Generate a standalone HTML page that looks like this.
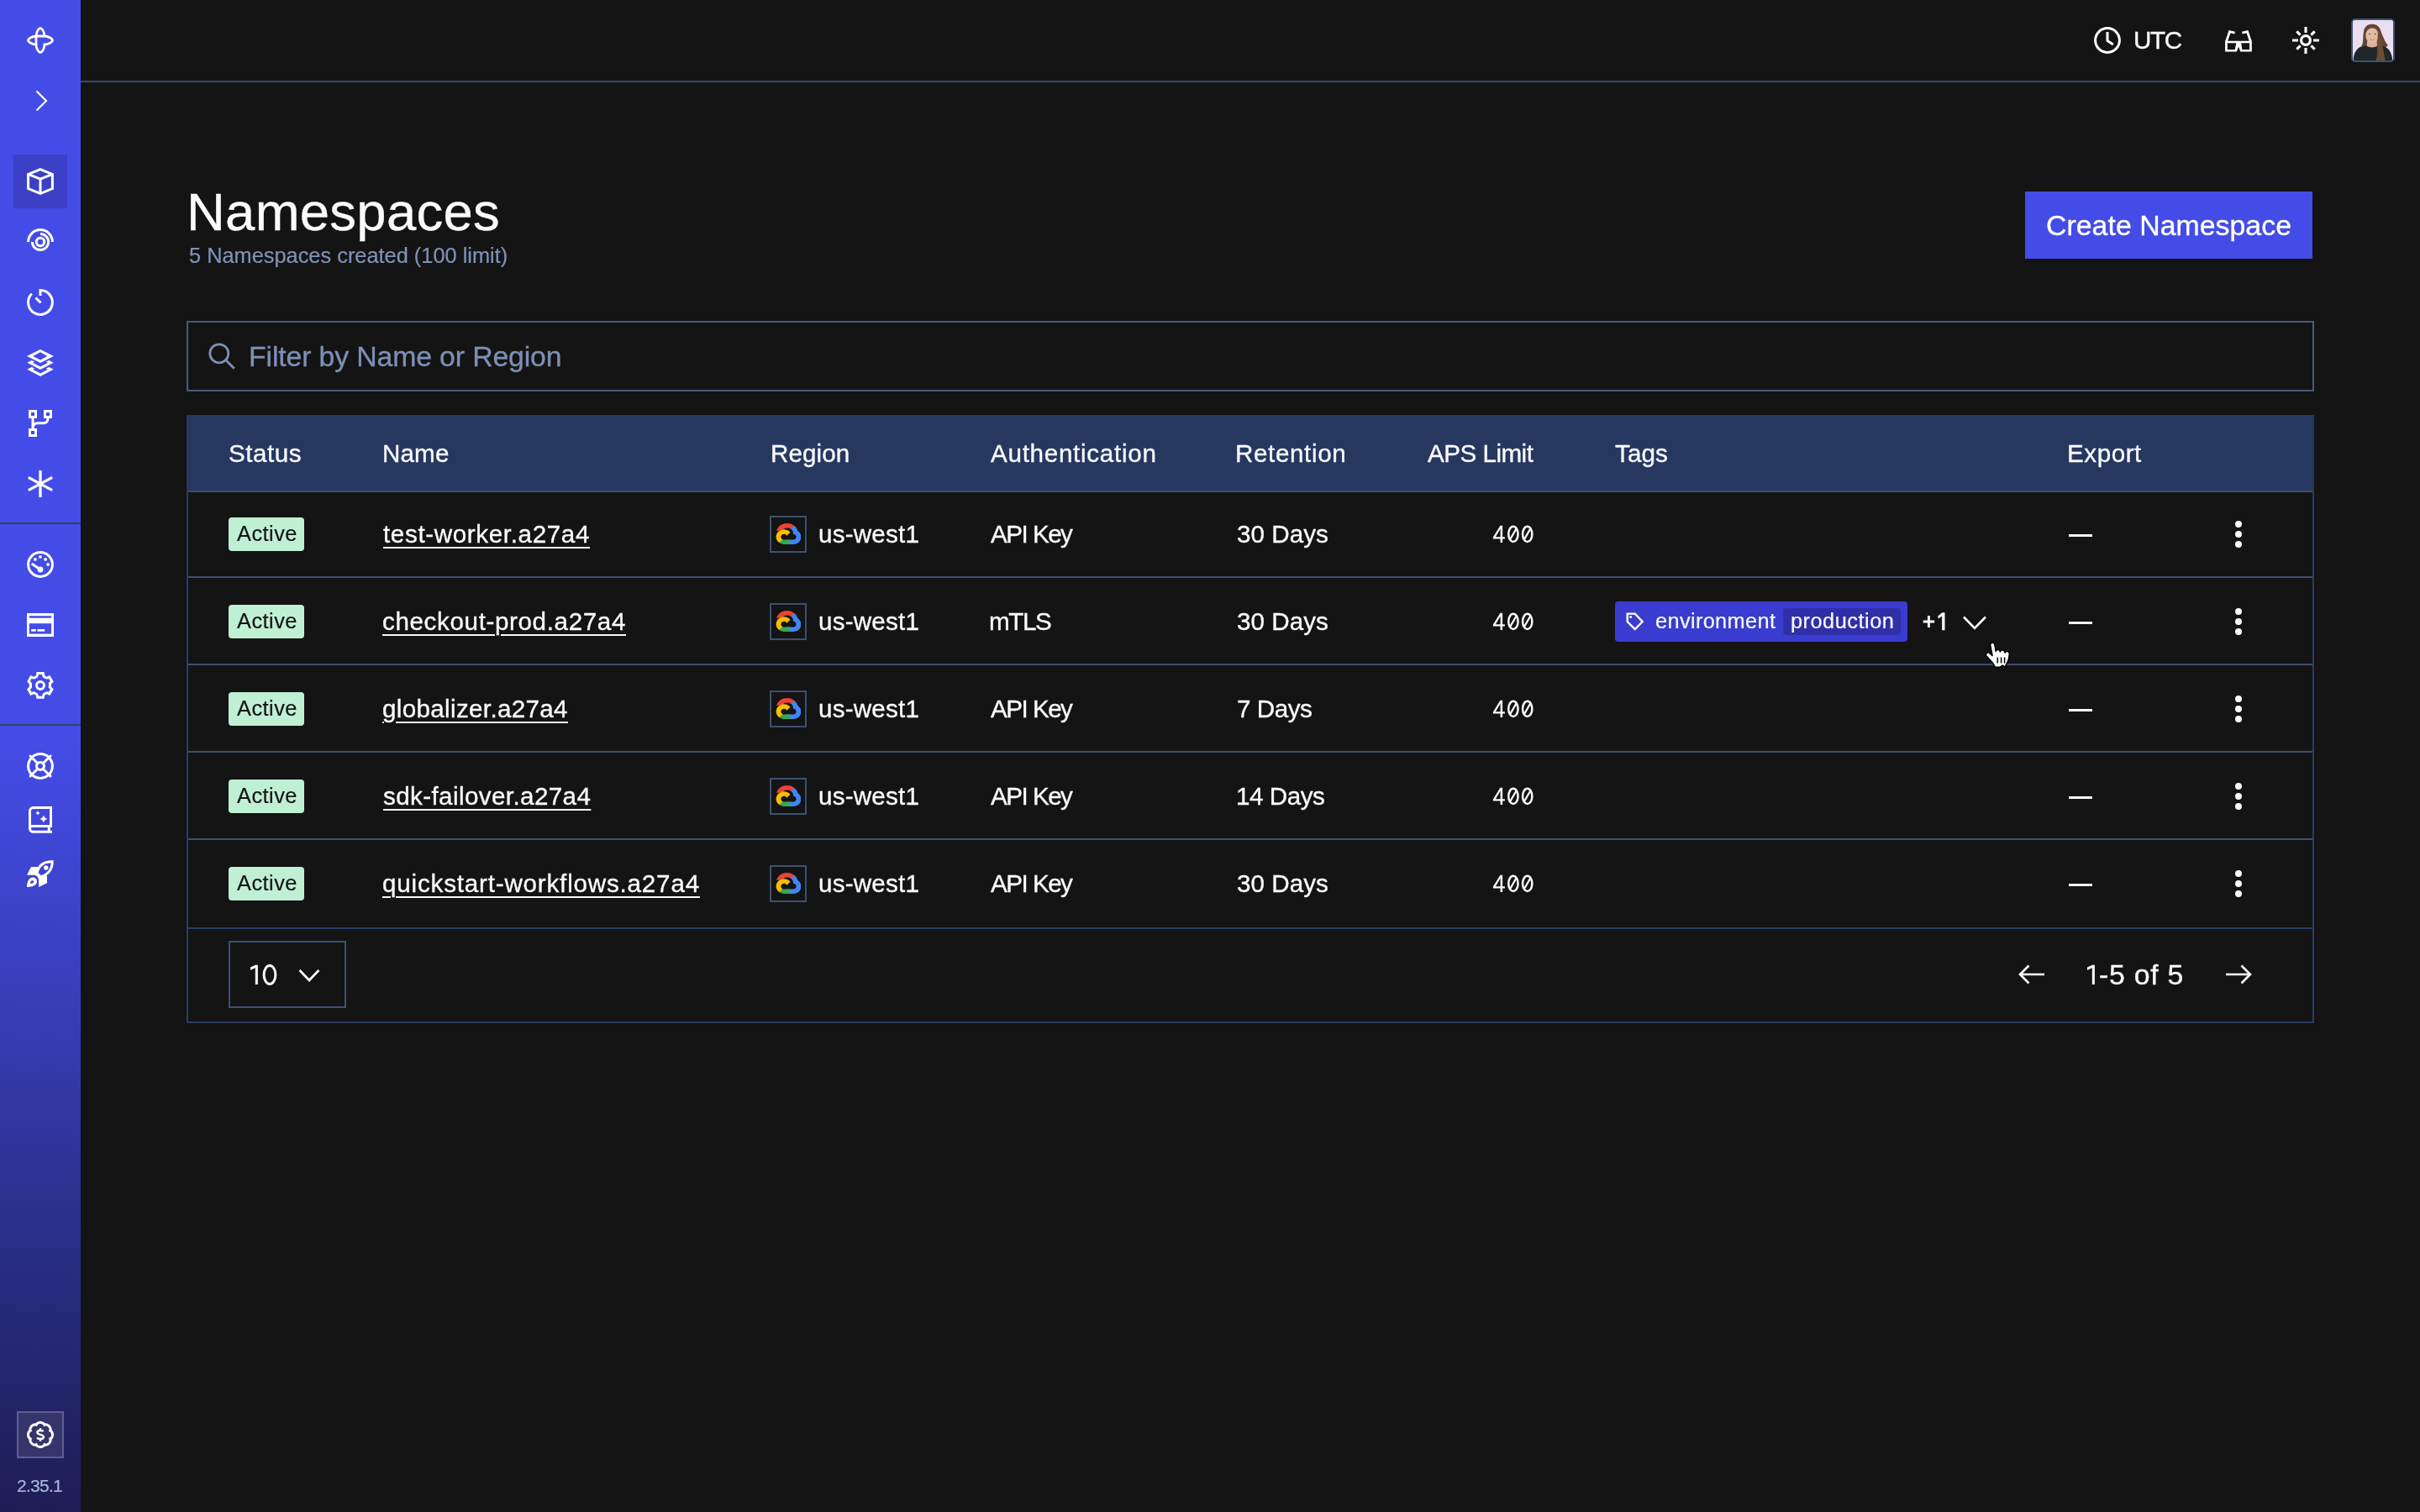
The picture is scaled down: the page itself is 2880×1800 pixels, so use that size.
<!DOCTYPE html>
<html><head><meta charset="utf-8"><style>
*{box-sizing:border-box;margin:0;padding:0}
html,body{width:2880px;height:1800px;overflow:hidden;background:#141414;font-family:"Liberation Sans",sans-serif;color:#f8fafc}
.abs{position:absolute}
.t{position:absolute;white-space:nowrap;line-height:1;will-change:transform;-webkit-text-stroke:0.35px currentColor}
.sm{-webkit-text-stroke:0.2px currentColor}
.lnk{text-decoration:underline;text-decoration-thickness:2px;text-underline-offset:5px}
#side{position:absolute;left:0;top:0;width:96px;height:1800px;background:linear-gradient(180deg,#444ce7 0px,#444ce7 880px,#383db7 1200px,#292d83 1500px,#1e1d55 1800px)}
.ico{position:absolute;left:32px;width:32px;height:32px;overflow:visible}
.sep{position:absolute;left:0;width:96px;height:2px;background:#334452}
@media (max-width:2000px){html{zoom:0.5}}
</style></head>
<body>
<div id="side">
  <!-- logo -->
  <svg class="ico" style="top:32px" viewBox="0 0 32 32" fill="none" stroke="#fff" stroke-width="2.8">
    <path d="M11 21 C6.5 21 1.6 18 1.6 16 C1.6 14 6.5 11 11 11 H21 C25.5 11 30.4 14 30.4 16 C30.4 18 25.5 21 21 21 C21 25.5 18 30.4 16 30.4 C14 30.4 11 25.5 11 21 V11 C11 6.5 14 1.6 16 1.6 C18 1.6 21 6.5 21 11"/>
  </svg>
  <!-- chevron -->
  <svg class="ico" style="top:104px" viewBox="0 0 32 32" fill="none" stroke="#fff" stroke-width="2.2">
    <path d="M11.5 4.5 L23 16 L11.5 27.5"/>
  </svg>
  <div class="abs" style="left:16px;top:184px;width:64px;height:64px;background:#3b40c6"></div>
  <!-- cube -->
  <svg class="ico" style="top:200px" viewBox="0 0 32 32" fill="none" stroke="#fff" stroke-width="3" stroke-linejoin="miter">
    <path d="M16 1.6 L30.4 7.4 V24.6 L16 30.4 L1.6 24.6 V7.4 Z M1.6 7.4 L16 13.2 L30.4 7.4 M16 13.2 V30.4"/>
  </svg>
  <!-- workflows rings -->
  <svg class="ico" style="top:272px" viewBox="0 0 32 32" fill="none" stroke="#fff" stroke-width="3">
    <path d="M1.6 16 A14.4 14.4 0 0 1 30.4 16"/>
    <path d="M16 6.4 A9.6 9.6 0 1 1 6.4 16"/>
    <circle cx="16" cy="16" r="4.7"/>
  </svg>
  <!-- timer -->
  <svg class="ico" style="top:344px" viewBox="0 0 32 32" fill="none" stroke="#fff" stroke-width="3">
    <path d="M16 8 V1.6 A14.4 14.4 0 1 1 5.8 5.8"/>
    <path d="M10.5 10.5 L16.5 16.5"/>
  </svg>
  <!-- layers -->
  <svg class="ico" style="top:416px" viewBox="0 0 32 32" fill="#fff">
    <path fill-rule="evenodd" d="M16 0 L32 8 L16 16 L0 8 Z M16 3.3 L24.4 8 L16 12.6 L7.2 8 Z"/>
    <path d="M0.3 15.8 L5.6 13 L9.1 14.4 L7.2 16 L16 20.6 L24.8 16 L22.9 14.4 L26.4 13 L31.7 15.8 L16 24 Z"/>
    <path d="M0.3 23.8 L5.6 21 L9.1 22.4 L7.2 24 L16 28.6 L24.8 24 L22.9 22.4 L26.4 21 L31.7 23.8 L16 32 Z"/>
  </svg>
  <!-- branch -->
  <svg class="ico" style="top:488px" viewBox="0 0 32 32" fill="none" stroke="#fff" stroke-width="3">
    <rect x="3.5" y="1.5" width="7" height="7"/>
    <rect x="21.5" y="1.5" width="7" height="7"/>
    <rect x="3.5" y="23.5" width="7" height="7"/>
    <path d="M7 10 V22 M25 10 C25 13.5 23 15.8 19.5 15.8 H12.5 C9.5 15.8 7.5 18 7.2 21"/>
  </svg>
  <!-- asterisk -->
  <svg class="ico" style="top:560px" viewBox="0 0 32 32" fill="none" stroke="#fff" stroke-width="3.3">
    <path d="M16 0 V32 M1.8 8.4 L30.2 23.6 M1.8 23.6 L30.2 8.4"/>
  </svg>
  <div class="sep" style="top:622px"></div>
  <!-- gauge -->
  <svg class="ico" style="top:656px" viewBox="0 0 32 32" fill="#fff">
    <circle cx="16" cy="16" r="14.4" fill="none" stroke="#fff" stroke-width="3"/>
    <circle cx="16" cy="6.9" r="1.9"/><circle cx="9.9" cy="9.9" r="1.9"/><circle cx="22.1" cy="9.9" r="1.9"/><circle cx="25.1" cy="16" r="1.9"/>
    <path d="M5.6 14.9 L16 22" stroke="#fff" stroke-width="3"/>
    <circle cx="16" cy="22" r="3.4"/>
  </svg>
  <!-- card -->
  <svg class="ico" style="top:728px" viewBox="0 0 32 32">
    <rect x="0" y="2" width="32" height="28" fill="#fff"/>
    <rect x="2.8" y="5.2" width="26.3" height="2.5" fill="#444ce7"/>
    <rect x="2.8" y="14.2" width="26.3" height="12.4" fill="#444ce7"/>
    <rect x="5.2" y="21" width="5.5" height="2.7" fill="#fff"/>
    <rect x="12.5" y="21" width="8.7" height="2.7" fill="#fff"/>
  </svg>
  <!-- gear -->
  <svg class="ico" style="top:800px" viewBox="0 0 32 32" fill="#fff">
    <path fill-rule="evenodd" d="M11.4 0.1 L20.7 0.1 L21.05 4.06 L23.4 5.65 L27.4 4.06 L31.84 11.5 L29 14.2 L29 17.7 L31.84 20.4 L27.4 27.9 L23.4 26.3 L21.05 27.9 L20.7 31.84 L11.4 31.84 L11.05 27.9 L8.5 26.3 L4.2 27.9 L0.1 20.4 L2.8 17.7 L2.8 14.2 L0.1 11.5 L4.2 4.06 L8.5 5.65 L11.05 4.06 Z M13.9 3.1 L18 3.1 L18.8 6.3 L23 8.5 L26 7.9 L27.9 11 L25.65 13.1 L26 16 L25.65 18.7 L27.9 20.6 L26 23.7 L23 23.3 L18.8 25.65 L18 28.8 L13.9 28.8 L13.1 25.65 L8.8 23.3 L5.3 23.7 L3.9 20.6 L6 18.7 L6 13.3 L3.9 11 L5.3 7.9 L8.8 8.5 L13.1 6.3 Z"/>
    <circle cx="16" cy="16" r="4.5" fill="none" stroke="#fff" stroke-width="3"/>
  </svg>
  <div class="sep" style="top:862px"></div>
  <!-- lifebuoy -->
  <svg class="ico" style="top:896px" viewBox="0 0 32 32" fill="none" stroke="#fff" stroke-width="3">
    <circle cx="16" cy="16" r="14.4"/>
    <circle cx="16" cy="16" r="4.5"/>
    <path d="M4 4 L12.8 12.8 M28 4 L19.2 12.8 M4 28 L12.8 19.2 M28 28 L19.2 19.2" stroke-linecap="round"/>
  </svg>
  <!-- book -->
  <svg class="ico" style="top:960px" viewBox="0 0 32 32" fill="none" stroke="#fff" stroke-width="3">
    <path d="M28.5 25 V1.6 H7.5 A4 4 0 0 0 3.5 5.6 V26.3 A4 4 0 0 0 7.5 30.3 H30"/>
    <path d="M3.5 26.5 A3 3 0 0 1 6.5 23.4 H30 M26.3 23.4 V30.3"/>
    <path fill="#fff" stroke="none" d="M19.9 10.2 C20.5 12.8 22 14.3 24.6 14.9 C22 15.5 20.5 17 19.9 19.6 C19.3 17 17.8 15.5 15.2 14.9 C17.8 14.3 19.3 12.8 19.9 10.2 Z M13 5.1 C13.35 6.6 14.1 7.55 15.8 7.9 C14.1 8.25 13.35 9.2 13 10.7 C12.65 9.2 11.9 8.25 10.2 7.9 C11.9 7.55 12.65 6.6 13 5.1 Z"/>
  </svg>
  <!-- rocket -->
  <svg class="ico" style="top:1024px" viewBox="0 0 32 32">
    <path fill="#fff" d="M0 17.7 L5 7.9 L13 7.9 L17 13 L24 19 L24 27.2 L14.2 32 L14 24 C14 20 11.5 17.7 8 17.7 Z"/>
    <path fill="#3e45d0" stroke="#fff" stroke-width="3" d="M12 15.5 C14 6 21 1.6 30.2 1.8 C30.4 10.5 25.5 17.5 16.5 19.8 Z"/>
    <circle cx="22.8" cy="9" r="2.7" fill="#fff"/>
    <path fill="#fff" d="M0 32 C0 26 2.5 20.5 7 20.5 C10 20.5 12 22.5 12 25.5 C12 30 6 32 0 32 Z"/>
    <path fill="#3d43cd" d="M3.8 28 C3.8 26 5 24.2 6.5 24.2 C7.5 24.2 8.2 24.9 8.2 25.8 C8.2 27.2 6.2 28 3.8 28 Z"/>
  </svg>
  <!-- billing badge -->
  <div class="abs" style="left:20px;top:1680px;width:56px;height:56px;background:#35356b;border:2px solid #5d5e96"></div>
  <svg class="ico" style="top:1692px" viewBox="0 0 32 32" fill="none" stroke="#fff" stroke-width="3">
    <path d="M16.00 1.50 L16.57 1.52 L17.13 1.60 L17.69 1.72 L18.24 1.88 L18.76 2.10 L19.27 2.37 L19.76 2.68 L20.21 3.05 L20.61 3.50 L20.88 4.22 L21.58 3.90 L22.18 3.87 L22.76 3.93 L23.33 4.04 L23.87 4.22 L24.40 4.44 L24.90 4.70 L25.38 5.01 L25.83 5.36 L26.25 5.75 L26.64 6.17 L26.99 6.62 L27.30 7.10 L27.56 7.60 L27.78 8.13 L27.96 8.67 L28.07 9.24 L28.13 9.82 L28.10 10.42 L27.78 11.12 L28.50 11.39 L28.95 11.79 L29.32 12.24 L29.63 12.73 L29.90 13.24 L30.12 13.76 L30.28 14.31 L30.40 14.87 L30.48 15.43 L30.50 16.00 L30.48 16.57 L30.40 17.13 L30.28 17.69 L30.12 18.24 L29.90 18.76 L29.63 19.27 L29.32 19.76 L28.95 20.21 L28.50 20.61 L27.78 20.88 L28.10 21.58 L28.13 22.18 L28.07 22.76 L27.96 23.33 L27.78 23.87 L27.56 24.40 L27.30 24.90 L26.99 25.38 L26.64 25.83 L26.25 26.25 L25.83 26.64 L25.38 26.99 L24.90 27.30 L24.40 27.56 L23.87 27.78 L23.33 27.96 L22.76 28.07 L22.18 28.13 L21.58 28.10 L20.88 27.78 L20.61 28.50 L20.21 28.95 L19.76 29.32 L19.27 29.63 L18.76 29.90 L18.24 30.12 L17.69 30.28 L17.13 30.40 L16.57 30.48 L16.00 30.50 L15.43 30.48 L14.87 30.40 L14.31 30.28 L13.76 30.12 L13.24 29.90 L12.73 29.63 L12.24 29.32 L11.79 28.95 L11.39 28.50 L11.12 27.78 L10.42 28.10 L9.82 28.13 L9.24 28.07 L8.67 27.96 L8.13 27.78 L7.60 27.56 L7.10 27.30 L6.62 26.99 L6.17 26.64 L5.75 26.25 L5.36 25.83 L5.01 25.38 L4.70 24.90 L4.44 24.40 L4.22 23.87 L4.04 23.33 L3.93 22.76 L3.87 22.18 L3.90 21.58 L4.22 20.88 L3.50 20.61 L3.05 20.21 L2.68 19.76 L2.37 19.27 L2.10 18.76 L1.88 18.24 L1.72 17.69 L1.60 17.13 L1.52 16.57 L1.50 16.00 L1.52 15.43 L1.60 14.87 L1.72 14.31 L1.88 13.76 L2.10 13.24 L2.37 12.73 L2.68 12.24 L3.05 11.79 L3.50 11.39 L4.22 11.12 L3.90 10.42 L3.87 9.82 L3.93 9.24 L4.04 8.67 L4.22 8.13 L4.44 7.60 L4.70 7.10 L5.01 6.62 L5.36 6.17 L5.75 5.75 L6.17 5.36 L6.62 5.01 L7.10 4.70 L7.60 4.44 L8.13 4.22 L8.67 4.04 L9.24 3.93 L9.82 3.87 L10.42 3.90 L11.12 4.22 L11.39 3.50 L11.79 3.05 L12.24 2.68 L12.73 2.37 L13.24 2.10 L13.76 1.88 L14.31 1.72 L14.87 1.60 L15.43 1.52 Z"/>
    <path d="M19.6 12 C19 11.3 17.8 11 16 11 C13.5 11 12.4 12 12.4 13.3 C12.4 14.8 13.8 15.3 16 15.9 C18.5 16.5 19.8 17.2 19.8 18.7 C19.8 20.2 18.3 21 16 21 C14 21 12.7 20.5 12 19.6" stroke-width="2.5"/>
    <path d="M16 8.2 V11 M16 21 V23.8" stroke-width="2.5"/>
  </svg>
  
</div>


<div class="abs" style="left:96px;top:96px;width:2784px;height:2px;background:#3b4a66"></div>
<svg class="abs" style="left:2492px;top:32px" width="32" height="32" viewBox="0 0 32 32" fill="none" stroke="#fff" stroke-width="3"><circle cx="16" cy="16" r="14.4"/><path d="M16 6 V16.4 L22.8 20.9"/></svg>
<svg class="abs" style="left:2648px;top:32px" width="32" height="32" viewBox="0 0 32 32"><path fill="#fff" fill-rule="evenodd" d="M0.1 16.8 H31.8 V29.5 H18.3 L16 23.4 L13.9 29.5 H0.1 Z M2.8 19.3 H13.3 L11.7 26.9 H2.8 Z M19.3 19.3 H29.1 V26.9 H20.3 Z"/><path fill="none" stroke="#fff" stroke-width="2.8" d="M1.5 17.5 L5.5 5.6 L11.6 7.2 M30.4 17.5 L26.5 5.6 L20.4 7.2"/></svg>
<svg class="abs" style="left:2728px;top:32px" width="32" height="32" viewBox="0 0 32 32" fill="none" stroke="#fff"><circle cx="16" cy="16" r="5.4" stroke-width="3.2"/><path d="M16 0 V7 M16 25 V32 M0 16 H7 M25 16 H32 M5.3 5.3 L9.6 9.6 M22.4 22.4 L26.7 26.7 M26.7 5.3 L22.4 9.6 M9.6 22.4 L5.3 26.7" stroke-width="3.1"/></svg>
<div class="abs" style="left:2798px;top:22px;width:52px;height:52px;border:2px solid #3c5175;border-radius:5px;overflow:hidden;background:#e8ddf0"><svg width="48" height="48" viewBox="0 0 48 48"><rect width="48" height="48" fill="#e9dff1"/><path fill="#644633" d="M22.6 4.8 C17.5 4.8 14 8 13 13 C12.2 17 12.4 23 11.8 27 C11.5 29 10.8 30.5 9.8 31.2 L20 32 L30 32 L39.5 32 C41 31 41.8 30 41.6 29.4 C39 27 37.5 23 36.2 20 C34.5 17 33.5 13 32.5 10.5 C30.5 6.5 27 4.8 22.6 4.8 Z"/><path fill="#212628" d="M0.5 48 C1.2 39 4.5 33 11 31.2 L17 30.2 C19 32.6 27 32.6 29 30.2 L36 31 C43 32.5 46.2 38.5 47.5 48 Z"/><path fill="#d9b39a" d="M17.2 25 L16.6 30.6 C18.8 33 27.2 33 29.2 30.6 L28.8 25 Z"/><ellipse cx="23.1" cy="18.4" rx="7.7" ry="9.4" fill="#e0bba2"/><path fill="#644633" d="M15.4 14.5 C15.8 9.6 19 7.2 23 7.2 C27 7.2 30.2 9.6 30.9 14 C29 10.6 26.2 9.2 23 9.2 C19.8 9.2 17.3 10.8 15.4 14.5 Z"/><path fill="#6e4d35" d="M29.5 13 C33 19 34.5 28 36.3 35 C37.4 41 38.2 45.5 38.6 48 L27.6 48 C29.2 42 30 34 28.6 27 C29.6 22 30.2 17 29.5 13 Z"/><circle cx="19.8" cy="16.4" r="0.75" fill="#3a2a20"/><circle cx="26.6" cy="16.4" r="0.75" fill="#3a2a20"/><path d="M20.6 22.6 Q23.2 24.4 25.8 22.6" stroke="#a87264" stroke-width="0.9" fill="#eee4de"/></svg></div>
<div class="abs" style="left:2410px;top:228px;width:342px;height:80px;background:#444ce7"></div>
<div class="abs" style="left:222px;top:382px;width:2532px;height:84px;border:2px solid #4a5b7a"></div>
<svg class="abs" style="left:248px;top:408px" width="32" height="32" viewBox="0 0 32 32" fill="none" stroke="#7e8fb5" stroke-width="2.8"><circle cx="12.8" cy="12.8" r="11"/><path d="M20.8 20.8 L30.8 30.8"/></svg>
<div class="abs" style="left:222px;top:494px;width:2532px;height:90px;background:#263760"></div>
<div class="abs" style="left:222px;top:584px;width:2px;height:634px;background:#2b3c69"></div>
<div class="abs" style="left:2752px;top:584px;width:2px;height:634px;background:#2b3c69"></div>
<div class="abs" style="left:222px;top:1216px;width:2532px;height:2px;background:#2b3c69"></div>
<div class="abs" style="left:224px;top:584px;width:2528px;height:2px;background:#3e4e6c"></div>
<div class="abs" style="left:224px;top:686px;width:2528px;height:2px;background:#3e4e6c"></div>
<div class="abs" style="left:224px;top:790px;width:2528px;height:2px;background:#3e4e6c"></div>
<div class="abs" style="left:224px;top:894px;width:2528px;height:2px;background:#3e4e6c"></div>
<div class="abs" style="left:224px;top:998px;width:2528px;height:2px;background:#3e4e6c"></div>
<div class="abs" style="left:224px;top:1104px;width:2528px;height:2px;background:#2b3c69"></div>
<div class="abs" style="left:272px;top:616px;width:90px;height:40px;background:#bff0d3;border-radius:4px"></div>
<div class="abs" style="left:916px;top:614px;width:44px;height:44px;border:2px solid #3d5070;padding:7px 0 0 1.5px"><svg width="33.5" height="25" viewBox="0 0 2385.7 1919.9" preserveAspectRatio="none"><path fill="#EA4335" d="M1513.8,528.7h72.8l207.4-207.4l10.2-88C1418.2-107.9,828.7-71.2,487.6,315.3C392.8,422.6,324,550.4,286.5,688.8c23.1-9.5,48.7-11,72.8-4.4l414.7-68.4c0,0,21.1-34.9,32-32.7c184.5-202.6,495-226.2,708-53.8H1513.8z"/><path fill="#4285F4" d="M2089.4,688.2c-47.7-175.5-145.5-333.3-281.6-454l-291,291c122.9,100.4,192.9,251.7,189.9,410.4v51.7c143.1,0,259,116,259,259c0,143.1-116,259-259,259h-518.1l-51.7,52.4v310.7l51.7,51.7h518.1c297,2.3,560.5-190.2,648.6-473.8C2443.4,1162.9,2335.9,863.4,2089.4,688.2z"/><path fill="#34A853" d="M929.4,1911.2h518.1V1496H929.4c-36.9,0-73.4-7.9-107-23.3l-72.8,22.6l-208.8,207.4l-18.2,72.8C639.7,1863.3,782.3,1911.7,929.4,1911.2z"/><path fill="#FBBC05" d="M929.4,564.5c-287.8,1.7-543.1,186-635.6,458.5c-92.5,272.5-1.8,573.7,225.9,750l300.5-300.5c-130.4-58.9-188.3-212.3-129.4-342.7c58.9-130.4,212.3-188.3,342.7-129.4c57.4,25.9,103.4,71.9,129.4,129.4l300.5-300.5C1335.6,661.9,1139.1,564,929.4,564.5z"/></svg></div>
<svg class="abs" style="left:1770px;top:620px" width="60" height="32" viewBox="0 0 60 32"><path fill="#f8fafc" fill-rule="evenodd" d="M15.4 5.7 H18.1 V19.2 H20.9 V21.6 H18.1 V25.9 H15.6 V21.6 H6.9 V19.4 Z M15.6 9.6 V19.2 H9.9 Z"/><g fill="none" stroke="#f8fafc" stroke-width="2.5"><ellipse cx="30.9" cy="15.9" rx="5.65" ry="9.05"/><ellipse cx="47.7" cy="15.9" rx="5.65" ry="9.05"/><path d="M34.6 9.2 L27.4 21.8 M51.4 9.2 L44.2 21.8" stroke-width="2.3"/></g></svg>
<div class="abs" style="left:2462px;top:635.5px;width:28px;height:3px;background:#f8fafc"></div>
<svg class="abs" style="left:2656px;top:620px" width="16" height="32" viewBox="0 0 16 32" fill="#f8fafc"><circle cx="8" cy="4" r="4"/><circle cx="8" cy="16" r="4"/><circle cx="8" cy="28" r="4"/></svg>
<div class="abs" style="left:272px;top:720px;width:90px;height:40px;background:#bff0d3;border-radius:4px"></div>
<div class="abs" style="left:916px;top:718px;width:44px;height:44px;border:2px solid #3d5070;padding:7px 0 0 1.5px"><svg width="33.5" height="25" viewBox="0 0 2385.7 1919.9" preserveAspectRatio="none"><path fill="#EA4335" d="M1513.8,528.7h72.8l207.4-207.4l10.2-88C1418.2-107.9,828.7-71.2,487.6,315.3C392.8,422.6,324,550.4,286.5,688.8c23.1-9.5,48.7-11,72.8-4.4l414.7-68.4c0,0,21.1-34.9,32-32.7c184.5-202.6,495-226.2,708-53.8H1513.8z"/><path fill="#4285F4" d="M2089.4,688.2c-47.7-175.5-145.5-333.3-281.6-454l-291,291c122.9,100.4,192.9,251.7,189.9,410.4v51.7c143.1,0,259,116,259,259c0,143.1-116,259-259,259h-518.1l-51.7,52.4v310.7l51.7,51.7h518.1c297,2.3,560.5-190.2,648.6-473.8C2443.4,1162.9,2335.9,863.4,2089.4,688.2z"/><path fill="#34A853" d="M929.4,1911.2h518.1V1496H929.4c-36.9,0-73.4-7.9-107-23.3l-72.8,22.6l-208.8,207.4l-18.2,72.8C639.7,1863.3,782.3,1911.7,929.4,1911.2z"/><path fill="#FBBC05" d="M929.4,564.5c-287.8,1.7-543.1,186-635.6,458.5c-92.5,272.5-1.8,573.7,225.9,750l300.5-300.5c-130.4-58.9-188.3-212.3-129.4-342.7c58.9-130.4,212.3-188.3,342.7-129.4c57.4,25.9,103.4,71.9,129.4,129.4l300.5-300.5C1335.6,661.9,1139.1,564,929.4,564.5z"/></svg></div>
<svg class="abs" style="left:1770px;top:724px" width="60" height="32" viewBox="0 0 60 32"><path fill="#f8fafc" fill-rule="evenodd" d="M15.4 5.7 H18.1 V19.2 H20.9 V21.6 H18.1 V25.9 H15.6 V21.6 H6.9 V19.4 Z M15.6 9.6 V19.2 H9.9 Z"/><g fill="none" stroke="#f8fafc" stroke-width="2.5"><ellipse cx="30.9" cy="15.9" rx="5.65" ry="9.05"/><ellipse cx="47.7" cy="15.9" rx="5.65" ry="9.05"/><path d="M34.6 9.2 L27.4 21.8 M51.4 9.2 L44.2 21.8" stroke-width="2.3"/></g></svg>
<div class="abs" style="left:2462px;top:739.5px;width:28px;height:3px;background:#f8fafc"></div>
<svg class="abs" style="left:2656px;top:724px" width="16" height="32" viewBox="0 0 16 32" fill="#f8fafc"><circle cx="8" cy="4" r="4"/><circle cx="8" cy="16" r="4"/><circle cx="8" cy="28" r="4"/></svg>
<div class="abs" style="left:272px;top:824px;width:90px;height:40px;background:#bff0d3;border-radius:4px"></div>
<div class="abs" style="left:916px;top:822px;width:44px;height:44px;border:2px solid #3d5070;padding:7px 0 0 1.5px"><svg width="33.5" height="25" viewBox="0 0 2385.7 1919.9" preserveAspectRatio="none"><path fill="#EA4335" d="M1513.8,528.7h72.8l207.4-207.4l10.2-88C1418.2-107.9,828.7-71.2,487.6,315.3C392.8,422.6,324,550.4,286.5,688.8c23.1-9.5,48.7-11,72.8-4.4l414.7-68.4c0,0,21.1-34.9,32-32.7c184.5-202.6,495-226.2,708-53.8H1513.8z"/><path fill="#4285F4" d="M2089.4,688.2c-47.7-175.5-145.5-333.3-281.6-454l-291,291c122.9,100.4,192.9,251.7,189.9,410.4v51.7c143.1,0,259,116,259,259c0,143.1-116,259-259,259h-518.1l-51.7,52.4v310.7l51.7,51.7h518.1c297,2.3,560.5-190.2,648.6-473.8C2443.4,1162.9,2335.9,863.4,2089.4,688.2z"/><path fill="#34A853" d="M929.4,1911.2h518.1V1496H929.4c-36.9,0-73.4-7.9-107-23.3l-72.8,22.6l-208.8,207.4l-18.2,72.8C639.7,1863.3,782.3,1911.7,929.4,1911.2z"/><path fill="#FBBC05" d="M929.4,564.5c-287.8,1.7-543.1,186-635.6,458.5c-92.5,272.5-1.8,573.7,225.9,750l300.5-300.5c-130.4-58.9-188.3-212.3-129.4-342.7c58.9-130.4,212.3-188.3,342.7-129.4c57.4,25.9,103.4,71.9,129.4,129.4l300.5-300.5C1335.6,661.9,1139.1,564,929.4,564.5z"/></svg></div>
<svg class="abs" style="left:1770px;top:828px" width="60" height="32" viewBox="0 0 60 32"><path fill="#f8fafc" fill-rule="evenodd" d="M15.4 5.7 H18.1 V19.2 H20.9 V21.6 H18.1 V25.9 H15.6 V21.6 H6.9 V19.4 Z M15.6 9.6 V19.2 H9.9 Z"/><g fill="none" stroke="#f8fafc" stroke-width="2.5"><ellipse cx="30.9" cy="15.9" rx="5.65" ry="9.05"/><ellipse cx="47.7" cy="15.9" rx="5.65" ry="9.05"/><path d="M34.6 9.2 L27.4 21.8 M51.4 9.2 L44.2 21.8" stroke-width="2.3"/></g></svg>
<div class="abs" style="left:2462px;top:843.5px;width:28px;height:3px;background:#f8fafc"></div>
<svg class="abs" style="left:2656px;top:828px" width="16" height="32" viewBox="0 0 16 32" fill="#f8fafc"><circle cx="8" cy="4" r="4"/><circle cx="8" cy="16" r="4"/><circle cx="8" cy="28" r="4"/></svg>
<div class="abs" style="left:272px;top:928px;width:90px;height:40px;background:#bff0d3;border-radius:4px"></div>
<div class="abs" style="left:916px;top:926px;width:44px;height:44px;border:2px solid #3d5070;padding:7px 0 0 1.5px"><svg width="33.5" height="25" viewBox="0 0 2385.7 1919.9" preserveAspectRatio="none"><path fill="#EA4335" d="M1513.8,528.7h72.8l207.4-207.4l10.2-88C1418.2-107.9,828.7-71.2,487.6,315.3C392.8,422.6,324,550.4,286.5,688.8c23.1-9.5,48.7-11,72.8-4.4l414.7-68.4c0,0,21.1-34.9,32-32.7c184.5-202.6,495-226.2,708-53.8H1513.8z"/><path fill="#4285F4" d="M2089.4,688.2c-47.7-175.5-145.5-333.3-281.6-454l-291,291c122.9,100.4,192.9,251.7,189.9,410.4v51.7c143.1,0,259,116,259,259c0,143.1-116,259-259,259h-518.1l-51.7,52.4v310.7l51.7,51.7h518.1c297,2.3,560.5-190.2,648.6-473.8C2443.4,1162.9,2335.9,863.4,2089.4,688.2z"/><path fill="#34A853" d="M929.4,1911.2h518.1V1496H929.4c-36.9,0-73.4-7.9-107-23.3l-72.8,22.6l-208.8,207.4l-18.2,72.8C639.7,1863.3,782.3,1911.7,929.4,1911.2z"/><path fill="#FBBC05" d="M929.4,564.5c-287.8,1.7-543.1,186-635.6,458.5c-92.5,272.5-1.8,573.7,225.9,750l300.5-300.5c-130.4-58.9-188.3-212.3-129.4-342.7c58.9-130.4,212.3-188.3,342.7-129.4c57.4,25.9,103.4,71.9,129.4,129.4l300.5-300.5C1335.6,661.9,1139.1,564,929.4,564.5z"/></svg></div>
<svg class="abs" style="left:1770px;top:932px" width="60" height="32" viewBox="0 0 60 32"><path fill="#f8fafc" fill-rule="evenodd" d="M15.4 5.7 H18.1 V19.2 H20.9 V21.6 H18.1 V25.9 H15.6 V21.6 H6.9 V19.4 Z M15.6 9.6 V19.2 H9.9 Z"/><g fill="none" stroke="#f8fafc" stroke-width="2.5"><ellipse cx="30.9" cy="15.9" rx="5.65" ry="9.05"/><ellipse cx="47.7" cy="15.9" rx="5.65" ry="9.05"/><path d="M34.6 9.2 L27.4 21.8 M51.4 9.2 L44.2 21.8" stroke-width="2.3"/></g></svg>
<div class="abs" style="left:2462px;top:947.5px;width:28px;height:3px;background:#f8fafc"></div>
<svg class="abs" style="left:2656px;top:932px" width="16" height="32" viewBox="0 0 16 32" fill="#f8fafc"><circle cx="8" cy="4" r="4"/><circle cx="8" cy="16" r="4"/><circle cx="8" cy="28" r="4"/></svg>
<div class="abs" style="left:272px;top:1032px;width:90px;height:40px;background:#bff0d3;border-radius:4px"></div>
<div class="abs" style="left:916px;top:1030px;width:44px;height:44px;border:2px solid #3d5070;padding:7px 0 0 1.5px"><svg width="33.5" height="25" viewBox="0 0 2385.7 1919.9" preserveAspectRatio="none"><path fill="#EA4335" d="M1513.8,528.7h72.8l207.4-207.4l10.2-88C1418.2-107.9,828.7-71.2,487.6,315.3C392.8,422.6,324,550.4,286.5,688.8c23.1-9.5,48.7-11,72.8-4.4l414.7-68.4c0,0,21.1-34.9,32-32.7c184.5-202.6,495-226.2,708-53.8H1513.8z"/><path fill="#4285F4" d="M2089.4,688.2c-47.7-175.5-145.5-333.3-281.6-454l-291,291c122.9,100.4,192.9,251.7,189.9,410.4v51.7c143.1,0,259,116,259,259c0,143.1-116,259-259,259h-518.1l-51.7,52.4v310.7l51.7,51.7h518.1c297,2.3,560.5-190.2,648.6-473.8C2443.4,1162.9,2335.9,863.4,2089.4,688.2z"/><path fill="#34A853" d="M929.4,1911.2h518.1V1496H929.4c-36.9,0-73.4-7.9-107-23.3l-72.8,22.6l-208.8,207.4l-18.2,72.8C639.7,1863.3,782.3,1911.7,929.4,1911.2z"/><path fill="#FBBC05" d="M929.4,564.5c-287.8,1.7-543.1,186-635.6,458.5c-92.5,272.5-1.8,573.7,225.9,750l300.5-300.5c-130.4-58.9-188.3-212.3-129.4-342.7c58.9-130.4,212.3-188.3,342.7-129.4c57.4,25.9,103.4,71.9,129.4,129.4l300.5-300.5C1335.6,661.9,1139.1,564,929.4,564.5z"/></svg></div>
<svg class="abs" style="left:1770px;top:1036px" width="60" height="32" viewBox="0 0 60 32"><path fill="#f8fafc" fill-rule="evenodd" d="M15.4 5.7 H18.1 V19.2 H20.9 V21.6 H18.1 V25.9 H15.6 V21.6 H6.9 V19.4 Z M15.6 9.6 V19.2 H9.9 Z"/><g fill="none" stroke="#f8fafc" stroke-width="2.5"><ellipse cx="30.9" cy="15.9" rx="5.65" ry="9.05"/><ellipse cx="47.7" cy="15.9" rx="5.65" ry="9.05"/><path d="M34.6 9.2 L27.4 21.8 M51.4 9.2 L44.2 21.8" stroke-width="2.3"/></g></svg>
<div class="abs" style="left:2462px;top:1051.5px;width:28px;height:3px;background:#f8fafc"></div>
<svg class="abs" style="left:2656px;top:1036px" width="16" height="32" viewBox="0 0 16 32" fill="#f8fafc"><circle cx="8" cy="4" r="4"/><circle cx="8" cy="16" r="4"/><circle cx="8" cy="28" r="4"/></svg>
<div class="abs" style="left:1922px;top:716px;width:348px;height:48px;background:#3a3bcf;border-radius:4px"></div>
<svg class="abs" style="left:1930px;top:724px" width="32" height="32" viewBox="0 0 32 32" fill="none" stroke="#fff" stroke-width="2.4"><path d="M6.7 6.6 H15.7 L24.7 16 L15.7 25 L6.7 16 Z"/><circle cx="10.6" cy="10.6" r="1.5" fill="#fff" stroke="none"/></svg>
<div class="abs" style="left:2122px;top:724px;width:140px;height:32px;background:#2f30a8;border-radius:4px"></div>
<svg class="abs" style="left:2284px;top:724px" width="40" height="32" viewBox="0 0 40 32" fill="none" stroke="#f8fafc"><path d="M4.7 16 H18.1 M11.4 9.1 V22.9" stroke-width="2.9"/><path fill="#f8fafc" stroke="none" d="M22.2 9.5 L27.4 5.3 H30.5 V26.2 H27.1 V9.6 L22.9 12.6 Z"/></svg>
<svg class="abs" style="left:2334px;top:726px" width="32" height="32" viewBox="0 0 32 32" fill="none" stroke="#fff" stroke-width="2.6"><path d="M3 8.5 L16 22 L29 8.5"/></svg>
<div class="abs" style="left:272px;top:1120px;width:140px;height:80px;border:2px solid #3d5075"></div>
<svg class="abs" style="left:294.2px;top:1144px" width="40" height="32" viewBox="0 0 40 32"><path fill="#f8fafc" d="M4 7.6 L10.2 4.7 H12.9 V28 H9.8 V8.2 L4 11.1 Z"/><ellipse cx="27" cy="16.5" rx="6.9" ry="10.9" fill="none" stroke="#f8fafc" stroke-width="3"/></svg>
<svg class="abs" style="left:2480px;top:1144px" width="16" height="32" viewBox="0 0 16 32"><path fill="#f8fafc" d="M4 7.6 L10.2 4.7 H12.9 V28 H9.8 V8.2 L4 11.1 Z"/></svg>
<svg class="abs" style="left:352px;top:1145px" width="32" height="32" viewBox="0 0 32 32" fill="none" stroke="#fff" stroke-width="2.6"><path d="M4.5 10 L16 22 L27.5 10"/></svg>
<svg class="abs" style="left:2402px;top:1144px" width="32" height="32" viewBox="0 0 32 32" fill="none" stroke="#fff" stroke-width="2.6"><path d="M31 16 H2 M12.5 5.5 L2 16 L12.5 26.5"/></svg>
<svg class="abs" style="left:2648px;top:1144px" width="32" height="32" viewBox="0 0 32 32" fill="none" stroke="#fff" stroke-width="2.6"><path d="M1 16 H30 M19.5 5.5 L30 16 L19.5 26.5"/></svg>
<div class="t" id="utc" style="left:2539.2px;top:33.14px;font-size:29.6px;letter-spacing:-1.3px;color:#f8fafc;">UTC</div>
<div class="t" id="title" style="left:222.1px;top:220.81px;font-size:63.42px;letter-spacing:0.307px;color:#f8fafc;">Namespaces</div>
<div class="t sm" id="sub" style="left:224.5px;top:291.82px;font-size:25.37px;letter-spacing:0.001px;color:#7f93b8;">5 Namespaces created (100 limit)</div>
<div class="t" id="btn" style="left:2434.8px;top:251.57px;font-size:33.82px;letter-spacing:0.044px;color:#ffffff;">Create Namespace</div>
<div class="t" id="filter" style="left:295.6px;top:407.87px;font-size:33.82px;letter-spacing:-0.141px;color:#7e8fb5;">Filter by Name or Region</div>
<div class="t" id="h0" style="left:272px;top:524.94px;font-size:29.6px;letter-spacing:0.52px;color:#f8fafc;">Status</div>
<div class="t" id="h1" style="left:454.5px;top:524.94px;font-size:29.6px;letter-spacing:0.138px;color:#f8fafc;">Name</div>
<div class="t" id="h2" style="left:916.5px;top:524.94px;font-size:29.6px;letter-spacing:0.08px;color:#f8fafc;">Region</div>
<div class="t" id="h3" style="left:1178.6px;top:524.94px;font-size:29.6px;letter-spacing:0.719px;color:#f8fafc;">Authentication</div>
<div class="t" id="h4" style="left:1470px;top:524.94px;font-size:29.6px;letter-spacing:0.625px;color:#f8fafc;">Retention</div>
<div class="t" id="h5" style="left:1699px;top:524.94px;font-size:29.6px;letter-spacing:-0.5px;color:#f8fafc;">APS Limit</div>
<div class="t" id="h6" style="left:1922.2px;top:524.94px;font-size:29.6px;letter-spacing:0.131px;color:#f8fafc;">Tags</div>
<div class="t" id="h7" style="left:2460.2px;top:524.94px;font-size:29.6px;letter-spacing:0.56px;color:#f8fafc;">Export</div>
<div class="t sm" id="act0" style="left:282px;top:622.82px;font-size:25.37px;letter-spacing:0.48px;color:#141414;">Active</div>
<div class="t lnk" id="nm0" style="left:456.1px;top:620.94px;font-size:29.6px;letter-spacing:0.636px;color:#f8fafc;">test-worker.a27a4</div>
<div class="t" id="rg0" style="left:974px;top:620.94px;font-size:29.6px;letter-spacing:0.205px;color:#f8fafc;">us-west1</div>
<div class="t" id="au0" style="left:1178.6px;top:620.94px;font-size:29.6px;letter-spacing:-1.5px;color:#f8fafc;">API Key</div>
<div class="t" id="rt0" style="left:1471.5px;top:620.94px;font-size:29.6px;letter-spacing:0.032px;color:#f8fafc;">30 Days</div>
<div class="t sm" id="act1" style="left:282px;top:726.82px;font-size:25.37px;letter-spacing:0.48px;color:#141414;">Active</div>
<div class="t lnk" id="nm1" style="left:455.1px;top:724.94px;font-size:29.6px;letter-spacing:0.629px;color:#f8fafc;">checkout-prod.a27a4</div>
<div class="t" id="rg1" style="left:974px;top:724.94px;font-size:29.6px;letter-spacing:0.205px;color:#f8fafc;">us-west1</div>
<div class="t" id="au1" style="left:1177.4px;top:724.94px;font-size:29.6px;letter-spacing:-1.398px;color:#f8fafc;">mTLS</div>
<div class="t" id="rt1" style="left:1471.5px;top:724.94px;font-size:29.6px;letter-spacing:0.032px;color:#f8fafc;">30 Days</div>
<div class="t sm" id="act2" style="left:282px;top:830.82px;font-size:25.37px;letter-spacing:0.48px;color:#141414;">Active</div>
<div class="t lnk" id="nm2" style="left:455.1px;top:828.94px;font-size:29.6px;letter-spacing:0.334px;color:#f8fafc;">globalizer.a27a4</div>
<div class="t" id="rg2" style="left:974px;top:828.94px;font-size:29.6px;letter-spacing:0.205px;color:#f8fafc;">us-west1</div>
<div class="t" id="au2" style="left:1178.6px;top:828.94px;font-size:29.6px;letter-spacing:-1.5px;color:#f8fafc;">API Key</div>
<div class="t" id="rt2" style="left:1471.5px;top:828.94px;font-size:29.6px;letter-spacing:-0.44px;color:#f8fafc;">7 Days</div>
<div class="t sm" id="act3" style="left:282px;top:934.82px;font-size:25.37px;letter-spacing:0.48px;color:#141414;">Active</div>
<div class="t lnk" id="nm3" style="left:456.1px;top:932.94px;font-size:29.6px;letter-spacing:0.397px;color:#f8fafc;">sdk-failover.a27a4</div>
<div class="t" id="rg3" style="left:974px;top:932.94px;font-size:29.6px;letter-spacing:0.205px;color:#f8fafc;">us-west1</div>
<div class="t" id="au3" style="left:1178.6px;top:932.94px;font-size:29.6px;letter-spacing:-1.5px;color:#f8fafc;">API Key</div>
<div class="t" id="rt3" style="left:1470.5px;top:932.94px;font-size:29.6px;letter-spacing:-0.465px;color:#f8fafc;">14 Days</div>
<div class="t sm" id="act4" style="left:282px;top:1038.82px;font-size:25.37px;letter-spacing:0.48px;color:#141414;">Active</div>
<div class="t lnk" id="nm4" style="left:455.1px;top:1036.94px;font-size:29.6px;letter-spacing:0.808px;color:#f8fafc;">quickstart-workflows.a27a4</div>
<div class="t" id="rg4" style="left:974px;top:1036.94px;font-size:29.6px;letter-spacing:0.205px;color:#f8fafc;">us-west1</div>
<div class="t" id="au4" style="left:1178.6px;top:1036.94px;font-size:29.6px;letter-spacing:-1.5px;color:#f8fafc;">API Key</div>
<div class="t" id="rt4" style="left:1471.5px;top:1036.94px;font-size:29.6px;letter-spacing:0.032px;color:#f8fafc;">30 Days</div>
<div class="t sm" id="env" style="left:1970.3px;top:726.52px;font-size:25.37px;letter-spacing:0.34px;color:#f8fafc;">environment</div>
<div class="t sm" id="prod" style="left:2130.8px;top:726.52px;font-size:25.37px;letter-spacing:0.49px;color:#f8fafc;">production</div>
<div class="t" id="pg" style="left:2498px;top:1143.67px;font-size:33.82px;letter-spacing:0.732px;color:#f8fafc;">-5 of 5</div>
<div class="t sm" id="ver" style="left:20px;top:1758.1px;font-size:21.14px;letter-spacing:-0.8px;color:#a8b6d8;">2.35.1</div>
<svg class="abs" style="left:2362px;top:764px" width="32" height="32" viewBox="0 0 32 32"><path fill="#fff" stroke="#000" stroke-width="1.5" stroke-linejoin="round" d="M9.0 1.0 C10.6 1.0 11.5 2.0 11.9 3.6 L13.2 11.6 C13.6 10.1 14.5 9.3 15.8 9.3 C17.2 9.4 17.9 10.3 18.2 11.7 L18.4 12.0 C18.9 10.5 20.0 9.7 21.4 9.9 C22.9 10.1 23.6 11.1 23.8 12.6 L24.0 13.0 C24.8 11.7 25.9 11.2 27.2 11.5 C28.7 11.9 29.4 13.0 29.3 14.6 C29.1 17.5 28.7 20.2 27.8 22.6 C27 24.8 25.7 26.6 24.9 28.4 L24.6 30.3 L21.2 28.0 L18.0 30.3 L12.4 30.3 C11.4 27.8 9.8 25.5 7.8 23.3 L2.1 16.9 C1.2 15.8 1.3 14.3 2.5 13.4 C3.7 12.5 5.1 12.7 6.3 13.9 L9.1 16.6 L6.8 4.4 C6.5 2.5 7.4 1.0 9.0 1.0 Z"/><path d="M15.3 18.4 V25.4 M19.6 18.4 V25.4 M23.6 18.4 V25.4" stroke="#000" stroke-width="1.5"/></svg>
</body></html>
